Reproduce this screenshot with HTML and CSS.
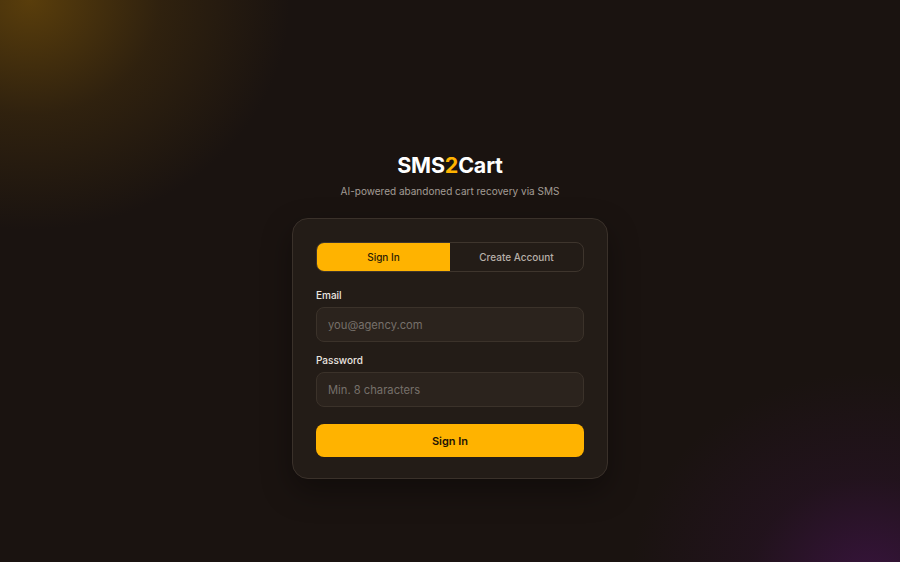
FILE: index.html
```html
<!DOCTYPE html>
<html lang="en">
<head>
<meta charset="utf-8">
<title>SMS2Cart — Sign In</title>
<link rel="stylesheet" href="styles.css">
</head>
<body>
<div class="scene">
  <div class="glow glow-top"></div>
  <div class="glow glow-bottom"></div>
  <main class="page">
    <header class="brand">
      <h1 class="logo">SMS<span class="accent">2</span>Cart</h1>
      <p class="tagline">AI-powered abandoned cart recovery via SMS</p>
    </header>
    <section class="card">
      <div class="tabs">
        <button class="tab tab-active">Sign In</button>
        <button class="tab">Create Account</button>
      </div>
      <form class="form">
        <label class="field">
          <span class="label">Email</span>
          <input class="input" type="email" placeholder="you@agency.com">
        </label>
        <label class="field">
          <span class="label">Password</span>
          <input class="input" type="password" placeholder="Min. 8 characters">
        </label>
        <button class="submit" type="button">Sign In</button>
      </form>
    </section>
  </main>
</div>
</body>
</html>
```
FILE: styles.css
```css
* { box-sizing: border-box; }
html, body { margin: 0; padding: 0; background: #1a1310; }
body {
  font-family: Inter, "Noto Sans", sans-serif;
  color: #f2ede8;
}
.scene {
  position: relative;
  width: 900px;
  height: 562px;
  overflow: hidden;
  background: #1a1310;
}
.glow {
  position: absolute;
  border-radius: 50%;
  pointer-events: none;
}
.glow-top {
  left: -230px;
  top: -230px;
  width: 520px;
  height: 460px;
  background: radial-gradient(closest-side, rgba(105, 72, 10, 0.8), rgba(80, 55, 12, 0.4) 50%, rgba(26, 19, 16, 0) 100%);
}
.glow-bottom {
  right: -210px;
  bottom: -230px;
  width: 480px;
  height: 420px;
  background: radial-gradient(closest-side, rgba(65, 20, 75, 0.75), rgba(48, 18, 52, 0.35) 50%, rgba(26, 19, 16, 0) 100%);
}
.page {
  position: relative;
  display: flex;
  flex-direction: column;
  align-items: center;
  padding-top: 151px;
}
.brand { text-align: center; }
.logo {
  margin: 0;
  font-size: 21.5px;
  font-weight: 700;
  line-height: 28px;
  color: #ffffff;
  letter-spacing: -0.2px;
}
.accent { color: #ffb300; }
.tagline {
  margin: 5px 0 0;
  font-size: 10px;
  line-height: 14px;
  color: #a39c95;
}
.card {
  margin-top: 20px;
  width: 316px;
  padding: 23px 23px 21px;
  background: #231c17;
  border: 1px solid #3a312a;
  border-radius: 16px;
  box-shadow: 0 12px 30px rgba(0, 0, 0, 0.35);
}
.tabs {
  display: flex;
  height: 30px;
  border: 1px solid #3e352d;
  border-radius: 8px;
  overflow: hidden;
}
.tab {
  flex: 1;
  border: 0;
  margin: 0;
  background: transparent;
  font-family: inherit;
  font-size: 10px;
  font-weight: 500;
  color: #b7b0a9;
  cursor: pointer;
}
.tab-active {
  background: #ffb300;
  color: #2a1c05;
}
.form {
  display: flex;
  flex-direction: column;
  gap: 11px;
  margin-top: 16px;
}
.field {
  display: flex;
  flex-direction: column;
  gap: 5px;
}
.label {
  font-size: 10px;
  line-height: 14px;
  font-weight: 500;
  color: #ece6e0;
}
.input {
  height: 35px;
  padding: 0 11px;
  background: #2b231d;
  border: 1px solid #3b322a;
  border-radius: 8px;
  font-family: inherit;
  font-size: 11.2px;
  color: #f2ede8;
  outline: none;
}
.input::placeholder { color: #76706a; }
.submit {
  margin-top: 6px;
  height: 33px;
  border: 0;
  border-radius: 8px;
  background: #ffb300;
  color: #1f1505;
  font-family: inherit;
  font-size: 11px;
  font-weight: 600;
  cursor: pointer;
}
```
